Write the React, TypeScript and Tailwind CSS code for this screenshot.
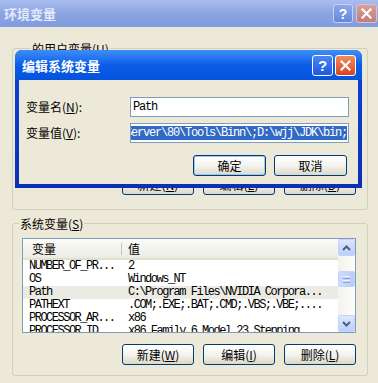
import React from "react";

function XpButton({ children, def = false }: { children: React.ReactNode; def?: boolean }) {
  return (
    <div
      className={
        "flex h-[21px] items-center justify-center rounded-[3px] border border-[#003c74] bg-gradient-to-b from-white via-[#f4f3ee] to-[#dcd8c8] text-[12px] leading-none text-black " +
        (def ? "w-[73px] shadow-[inset_0_0_0_1px_#a8c4f0]" : "w-[73px]")
      }
    >
      {children}
    </div>
  );
}

function GroupButton({ children }: { children: React.ReactNode }) {
  return (
    <div className="flex h-[21px] w-[72px] items-center justify-center rounded-[3px] border border-[#003c74] bg-gradient-to-b from-white via-[#f4f3ee] to-[#dcd8c8] text-[12px] leading-none text-black">
      {children}
    </div>
  );
}

function CloseX({ color = "white" }: { color?: string }) {
  return (
    <svg width="11" height="11" viewBox="0 0 11 11">
      <path d="M1.5 1.5 L9.5 9.5 M9.5 1.5 L1.5 9.5" stroke={color} strokeWidth="2.2" strokeLinecap="square" />
    </svg>
  );
}

const rows: [string, string][] = [
  ["NUMBER_OF_PR...", "2"],
  ["OS", "Windows_NT"],
  ["Path", "C:\\Program Files\\NVIDIA Corpora..."],
  ["PATHEXT", ".COM;.EXE;.BAT;.CMD;.VBS;.VBE;...."],
  ["PROCESSOR_AR...", "x86"],
  ["PROCESSOR_ID...", "x86 Family 6 Model 23 Stepping"],
];

function ScrollBtn({ up }: { up: boolean }) {
  return (
    <div className="flex h-[17px] w-[17px] items-center justify-center rounded-[2px] border border-[#c3d3fd] bg-gradient-to-b from-[#dce7fe] to-[#bccffb]">
      <svg width="9" height="6" viewBox="0 0 9 6">
        <path
          d={up ? "M1 5 L4.5 1.5 L8 5" : "M1 1 L4.5 4.5 L8 1"}
          stroke="#4d6185"
          strokeWidth="2"
          fill="none"
        />
      </svg>
    </div>
  );
}

export default function App() {
  return (
    <div className="relative h-[383px] w-[378px] overflow-hidden bg-[#ece9d8] font-['Noto_Sans_CJK_SC',sans-serif] text-[12px] text-black">
      {/* outer title bar (inactive) */}
      <div className="flex h-[27px] items-center bg-gradient-to-b from-[#a9bdee] via-[#8ca4e2] to-[#809bdf] pl-[4px]">
        <span className="text-[13px] font-bold leading-none text-[#e3eafb]">环境变量</span>
        <div className="ml-auto mr-[1px] flex items-center gap-[3px]">
          <div className="flex h-[19px] w-[20px] items-center justify-center rounded-[3px] border border-[#c7d3f3] bg-gradient-to-b from-[#8ea7ea] to-[#6787dc] font-['Liberation_Sans',sans-serif] text-[14px] font-bold leading-none text-white">
            ?
          </div>
          <div className="flex h-[19px] w-[21px] items-center justify-center rounded-[3px] border border-[#dcc3c8] bg-gradient-to-b from-[#d6a19d] to-[#c27c79]">
            <CloseX />
          </div>
        </div>
      </div>

      <div className="pl-[12px] pr-[10px] pt-[21px]">
        {/* user variables group */}
        <div className="flex h-[162px] flex-col rounded-[3px] border border-[#d0d0bf]">
          <div className="-mt-[7px] ml-[18px] w-fit bg-[#ece9d8] px-[1px] leading-[13px]">
            的用户变量(<u>U</u>)
          </div>
          <div className="mb-[14px] mr-[11px] mt-auto flex justify-end gap-[9px]">
            <GroupButton>新建(<u>N</u>)</GroupButton>
            <GroupButton>编辑(<u>E</u>)</GroupButton>
            <GroupButton>删除(<u>D</u>)</GroupButton>
          </div>
        </div>

        {/* system variables group */}
        <div className="mt-[13px] flex h-[153px] flex-col rounded-[3px] border border-[#d0d0bf]">
          <div className="-mt-[7px] ml-[6px] w-fit bg-[#ece9d8] px-[1px] leading-[13px]">
            系统变量(<u>S</u>)
          </div>
          <div className="ml-[9px] mt-[8px] flex h-[95px] w-[334px] border border-[#7f9db9] bg-white">
            <div className="flex min-w-0 flex-1 flex-col overflow-hidden">
              <div className="flex h-[21px] shrink-0 items-center border-b-[2px] border-[#e2dfcf] bg-gradient-to-b from-[#fbfbf8] to-[#ecebe3]">
                <div className="flex w-[98px] items-center pl-[9px] leading-none">变量</div>
                <div className="h-[12px] w-[1px] bg-[#c7c5b2]" />
                <div className="pl-[6px] leading-none">值</div>
              </div>
              <div className="font-['Liberation_Mono','Courier_New',monospace] text-[12px] tracking-[-1.5px]">
                {rows.map(([k, v]) => (
                  <div
                    key={k}
                    className={
                      "flex h-[13px] items-center whitespace-nowrap leading-[13px] " +
                      (k === "Path" ? "bg-[#ebeae3]" : "")
                    }
                  >
                    <div className="w-[99px] shrink-0 pl-[6px]">{k}</div>
                    <div className="pl-[6px]">{v}</div>
                  </div>
                ))}
              </div>
            </div>
            {/* scrollbar */}
            <div className="flex w-[17px] shrink-0 flex-col bg-gradient-to-r from-[#f3f2ec] to-[#fdfdfb]">
              <ScrollBtn up />
              <div className="mt-[15px] flex h-[16px] w-[17px] flex-col items-center justify-center gap-[1px] rounded-[2px] border border-[#c3d3fd] bg-gradient-to-r from-[#cddcfe] to-[#b8cbf9]">
                <div className="h-[1px] w-[7px] bg-[#eef4fe]" />
                <div className="h-[1px] w-[7px] bg-[#8ca3d6]" />
                <div className="h-[1px] w-[7px] bg-[#eef4fe]" />
                <div className="h-[1px] w-[7px] bg-[#8ca3d6]" />
              </div>
              <div className="flex-1" />
              <ScrollBtn up={false} />
            </div>
          </div>
          <div className="mr-[11px] mt-[11px] flex justify-end gap-[9px]">
            <GroupButton>新建(<u>W</u>)</GroupButton>
            <GroupButton>编辑(<u>I</u>)</GroupButton>
            <GroupButton>删除(<u>L</u>)</GroupButton>
          </div>
        </div>
      </div>

      {/* edit system variable dialog */}
      <div className="absolute left-[15px] top-[50px] flex h-[138px] w-[347px] flex-col rounded-t-[7px] bg-gradient-to-b from-[#0a46dc] to-[#0b2fb4]">
        <div className="flex h-[30px] shrink-0 items-center rounded-t-[7px] bg-gradient-to-b from-[#3d8ef6] via-[#0a5de9] to-[#0552dc] pl-[7px] pr-[6px]">
          <span className="text-[13px] font-bold leading-none text-white">编辑系统变量</span>
          <div className="ml-auto flex items-center gap-[2px]">
            <div className="flex h-[21px] w-[21px] items-center justify-center rounded-[3px] border border-white bg-gradient-to-b from-[#4c86f4] to-[#1c57e0] font-['Liberation_Sans',sans-serif] text-[15px] font-bold leading-none text-white">
              ?
            </div>
            <div className="flex h-[21px] w-[21px] items-center justify-center rounded-[3px] border border-white bg-gradient-to-b from-[#f08a5f] to-[#d8421d]">
              <CloseX />
            </div>
          </div>
        </div>
        <div className="mx-[4px] mb-[4px] flex flex-1 flex-col bg-[#ece9d8] pl-[7px] pr-[9px] pt-[17px]">
          <div className="flex h-[20px] items-center">
            <div className="w-[104px] leading-none">
              变量名(<u>N</u>):
            </div>
            <div className="flex h-[20px] w-[219px] items-center border border-[#7f9db9] bg-white pl-[2px] font-['Liberation_Mono','Courier_New',monospace] text-[12px] tracking-[-1.2px]">
              Path
            </div>
          </div>
          <div className="mt-[6px] flex h-[20px] items-center">
            <div className="w-[104px] leading-none">
              变量值(<u>V</u>):
            </div>
            <div className="flex h-[20px] w-[219px] items-center justify-end overflow-hidden border border-[#7f9db9] bg-white pr-[1px] font-['Liberation_Mono','Courier_New',monospace] text-[12px] tracking-[-1.2px]">
              <span className="whitespace-nowrap bg-[#316ac5] leading-[14px] text-white">
                C:\Program Files\Microsoft SQL Server\80\Tools\Binn\;D:\wjj\JDK\bin;
              </span>
            </div>
          </div>
          <div className="mr-[2px] mt-[12px] flex justify-end gap-[8px]">
            <XpButton def>确定</XpButton>
            <XpButton>取消</XpButton>
          </div>
        </div>
      </div>
    </div>
  );
}
